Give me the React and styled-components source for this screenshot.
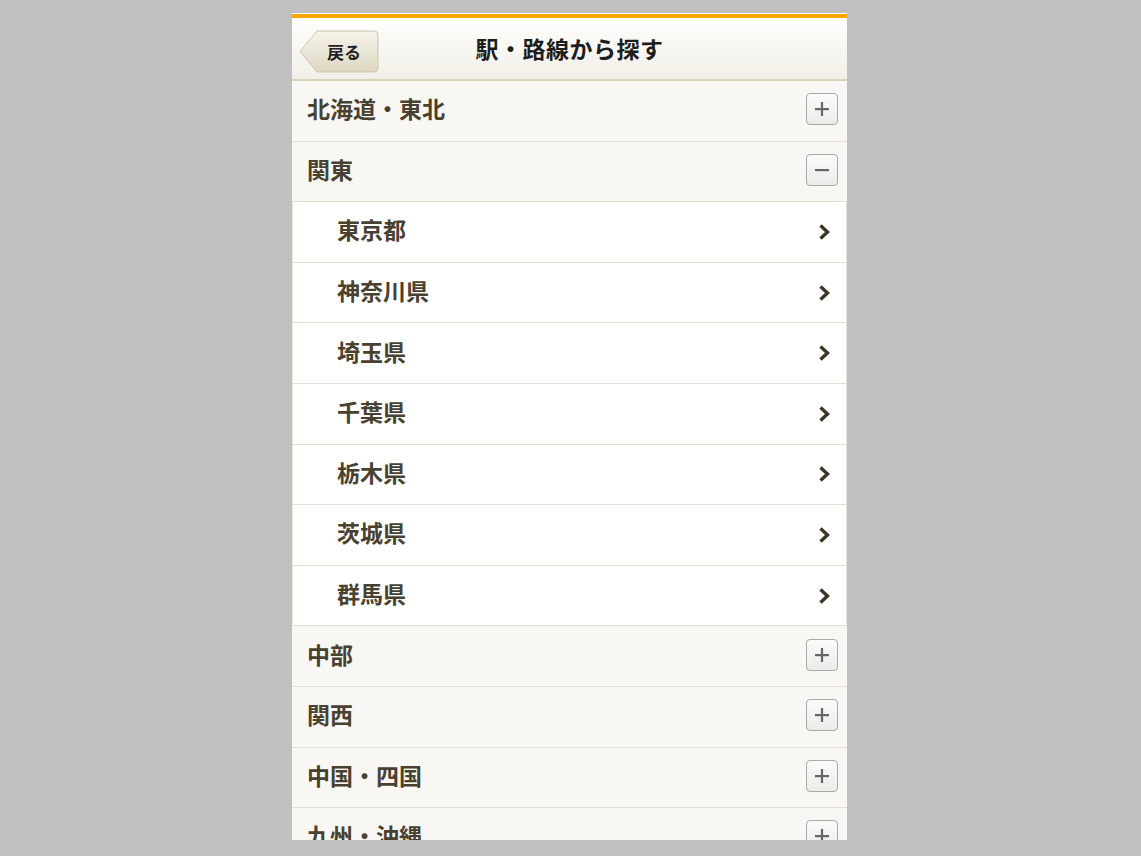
import React, {useState} from 'react'
import styled, {createGlobalStyle} from 'styled-components';

const Global = createGlobalStyle`
html, body {
  margin: 0;
  padding: 0;
  background: #c0c0c0;
}
body {
  font-family: "Noto Sans CJK JP", "Noto Sans", sans-serif;
}
`

const Page = styled.div`
height: 856px;
box-sizing: border-box;
padding: 13px 0 0 292px;
display: flex;
align-items: flex-start;
`

const Phone = styled.div`
width: 555px;
height: 827px;
overflow: hidden;
background: #f8f7f3;
border-top: 1px solid #ffffff;
box-sizing: border-box;
`

const Header = styled.header`
position: relative;
height: 61px;
border-top: 4px solid #f7a700;
border-bottom: 2px solid #d9d1b8;
background: linear-gradient(#fefefd, #f1efe7);
display: flex;
align-items: center;
justify-content: center;
`

const Title = styled.h1`
margin: 0 0 2px;
font-size: 23px;
font-weight: 700;
color: #1d1d1d;
letter-spacing: 0.5px;
`

// 戻るボタン (矢印型)
const Back = styled.button`
position: absolute;
left: 7px;
top: 12px;
width: 80px;
height: 43px;
border: none;
padding: 0;
background: transparent;
cursor: pointer;
svg { position: absolute; left: 0; top: 0; }
span {
  position: relative;
  display: block;
  padding-left: 10px;
  font-family: "Noto Sans CJK JP", sans-serif;
  font-size: 17px;
  font-weight: 700;
  color: #222;
}
`

const Row = styled.div`
height: 59.6px;
box-sizing: content-box;
border-bottom: 1px solid #e2dfd3;
display: flex;
align-items: center;
justify-content: space-between;
padding: 0 9px 0 15px;
background: #f8f7f3;
`

const SubRow = styled(Row)`
background: #ffffff;
padding: 0 15px 0 44px;
border-left: 1px solid #e8e5da;
border-right: 1px solid #e8e5da;
`

const Label = styled.span`
font-size: 23px;
line-height: 1;
padding-bottom: 4px;
font-weight: 700;
color: #48412f;
`

const Toggle = styled.span`
width: 32px;
height: 32px;
box-sizing: border-box;
border: 1px solid #a9a9a6;
border-radius: 4px;
background: linear-gradient(#fbfbfa, #ebebe8);
display: flex;
align-items: center;
justify-content: center;
margin-bottom: 3px;
`

const Group = styled.div`
box-shadow: inset 0 2px 2px rgba(160, 150, 120, 0.2);
`

const Plus = ({open}) => (
    <svg width="16" height="16" viewBox="0 0 16 16">
        <rect x="1" y="7" width="14" height="2.2" fill="#666" />
        {!open && <rect x="6.9" y="1" width="2.2" height="14" fill="#666" />}
    </svg>
)

const Chevron = () => (
    <svg width="13" height="18" viewBox="0 0 13 18">
        <path d="M2.5 2.5 L9.5 9 L2.5 15.5" fill="none" stroke="#3d3526" strokeWidth="3.4" />
    </svg>
)

const regions = [
    {name: "北海道・東北"},
    {name: "関東", prefs: ["東京都", "神奈川県", "埼玉県", "千葉県", "栃木県", "茨城県", "群馬県"]},
    {name: "中部"},
    {name: "関西"},
    {name: "中国・四国"},
    {name: "九州・沖縄"},
]

export default function App() {
    const [open, setOpen] = useState("関東");

    return (
        <Page>
            <Global />
            <Phone>
                <Header>
                    <Back>
                        <svg width="80" height="43" viewBox="0 0 80 43">
                            <defs>
                                <linearGradient id="bk" x1="0" y1="0" x2="0" y2="1">
                                    <stop offset="0" stopColor="#f6f3ea" />
                                    <stop offset="1" stopColor="#ddd7c2" />
                                </linearGradient>
                            </defs>
                            <path d="M1 21.5 L18 1 H75 Q79 1 79 5 V38 Q79 42 75 42 H18 Z" fill="url(#bk)" stroke="#cbc3ab" strokeWidth="1" />
                        </svg>
                        <span>戻る</span>
                    </Back>
                    <Title>駅・路線から探す</Title>
                </Header>
                {regions.map((r) => (
                    <div key={r.name}>
                        <Row onClick={() => setOpen(open === r.name ? null : r.name)}>
                            <Label>{r.name}</Label>
                            <Toggle><Plus open={open === r.name} /></Toggle>
                        </Row>
                        {open === r.name && r.prefs &&
                        <Group>
                            {r.prefs.map((p) => (
                                <SubRow key={p}>
                                    <Label>{p}</Label>
                                    <Chevron />
                                </SubRow>
                            ))}
                        </Group>}
                    </div>
                ))}
            </Phone>
        </Page>
    )
}
